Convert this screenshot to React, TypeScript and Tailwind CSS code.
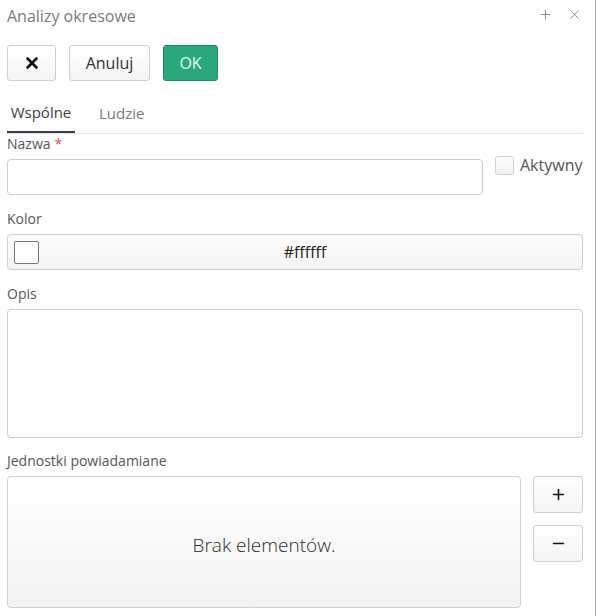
import { Plus, X, Minus } from 'lucide-react';

function Label({ children, required }: { children: string; required?: boolean }) {
  return (
    <div className="h-[20px] text-[14px] leading-[20px] text-[#555] mb-[5px]">
      {children}
      {required && <span className="text-[#e0504a] ml-[4px]">*</span>}
    </div>
  );
}

export default function App() {
  return (
    <div
      className="w-[596px] h-[616px] bg-white border-r border-[#a8a8a8] overflow-hidden"
      style={{ fontFamily: "'Open Sans', 'Noto Sans', sans-serif" }}
    >
      {/* header */}
      <div className="flex items-center h-[32px] pl-[7px] pr-[13px]">
        <div className="flex-1 text-[16px] text-[#7a7a7a]">Analizy okresowe</div>
        <Plus size={15} strokeWidth={1.3} className="text-[#777] mr-[14px] -mt-[4px]" />
        <X size={15} strokeWidth={1.3} className="text-[#777] -mt-[4px]" />
      </div>

      <div className="pl-[7px] pr-[12px]">
        {/* toolbar */}
        <div className="flex gap-[13px] mt-[13px]">
          <button className="w-[49px] h-[36px] flex items-center justify-center rounded-[3px] border border-[#cfcfcf] bg-gradient-to-b from-white to-[#f4f4f4]">
            <X size={18} strokeWidth={3.5} className="text-[#111]" />
          </button>
          <button className="w-[81px] h-[36px] rounded-[3px] border border-[#cfcfcf] bg-gradient-to-b from-white to-[#f4f4f4] text-[16px] text-[#333]">
            Anuluj
          </button>
          <button className="w-[55px] h-[36px] rounded-[3px] border border-[#1f8d68] bg-[#29a77e] text-[16px] text-[#eaf7f1]">
            OK
          </button>
        </div>

        {/* tabs */}
        <div className="flex mt-[16px] border-b border-[#e4e4e4]">
          <div className="w-[68px] h-[36px] pb-[3px] flex items-center justify-center text-[15px] text-[#3d3d45] border-b-2 border-[#3d3d4a] -mb-[1px]">
            Wspólne
          </div>
          <div className="ml-[24px] h-[36px] pb-[3px] flex items-center text-[15px] text-[#7a7a7a]">Ludzie</div>
        </div>

        {/* nazwa + aktywny */}
        <div className="flex">
          <div className="w-[476px]">
            <Label required>Nazwa</Label>
            <div className="h-[36px] rounded-[4px] border border-[#cccccc] bg-white" />
          </div>
          <div className="flex items-start ml-[12px] mt-[22px]">
            <div className="w-[19px] h-[19px] rounded-[3px] border border-[#d0d0d0] bg-gradient-to-b from-white to-[#f0f0f0]" />
            <span className="ml-[6px] text-[16px] leading-[18px] text-[#555]">Aktywny</span>
          </div>
        </div>

        {/* kolor */}
        <div className="mt-[14px]">
          <Label>Kolor</Label>
          <div className="h-[36px] rounded-[4px] border border-[#d0d0d0] bg-gradient-to-b from-[#fdfdfd] to-[#f3f3f3] flex items-center">
            <div className="ml-[6px] w-[25px] h-[23px] rounded-[2px] border border-[#777] bg-white" />
            <div className="flex-1 text-center text-[16px] text-[#222] pr-[11px]">#ffffff</div>
          </div>
        </div>

        {/* opis */}
        <div className="mt-[14px]">
          <Label>Opis</Label>
          <div className="h-[129px] rounded-[4px] border border-[#cccccc] bg-white" />
        </div>

        {/* jednostki */}
        <div className="mt-[13px]">
          <Label>Jednostki powiadamiane</Label>
          <div className="flex">
            <div className="w-[514px] h-[132px] pt-[6px] rounded-[4px] border border-[#d0d0d0] bg-gradient-to-b from-white to-[#f3f3f3] flex items-center justify-center">
              <span className="text-[19px] font-light text-[#2a2a2a]">Brak elementów.</span>
            </div>
            <div className="ml-[12px] flex flex-col gap-[12px]">
              <button className="w-[50px] h-[37px] flex items-center justify-center rounded-[3px] border border-[#cfcfcf] bg-gradient-to-b from-white to-[#f4f4f4]">
                <Plus size={17} strokeWidth={2.2} className="text-[#111]" />
              </button>
              <button className="w-[50px] h-[37px] flex items-center justify-center rounded-[3px] border border-[#cfcfcf] bg-gradient-to-b from-white to-[#f4f4f4]">
                <Minus size={17} strokeWidth={2.2} className="text-[#111]" />
              </button>
            </div>
          </div>
        </div>
      </div>
    </div>
  );
}
